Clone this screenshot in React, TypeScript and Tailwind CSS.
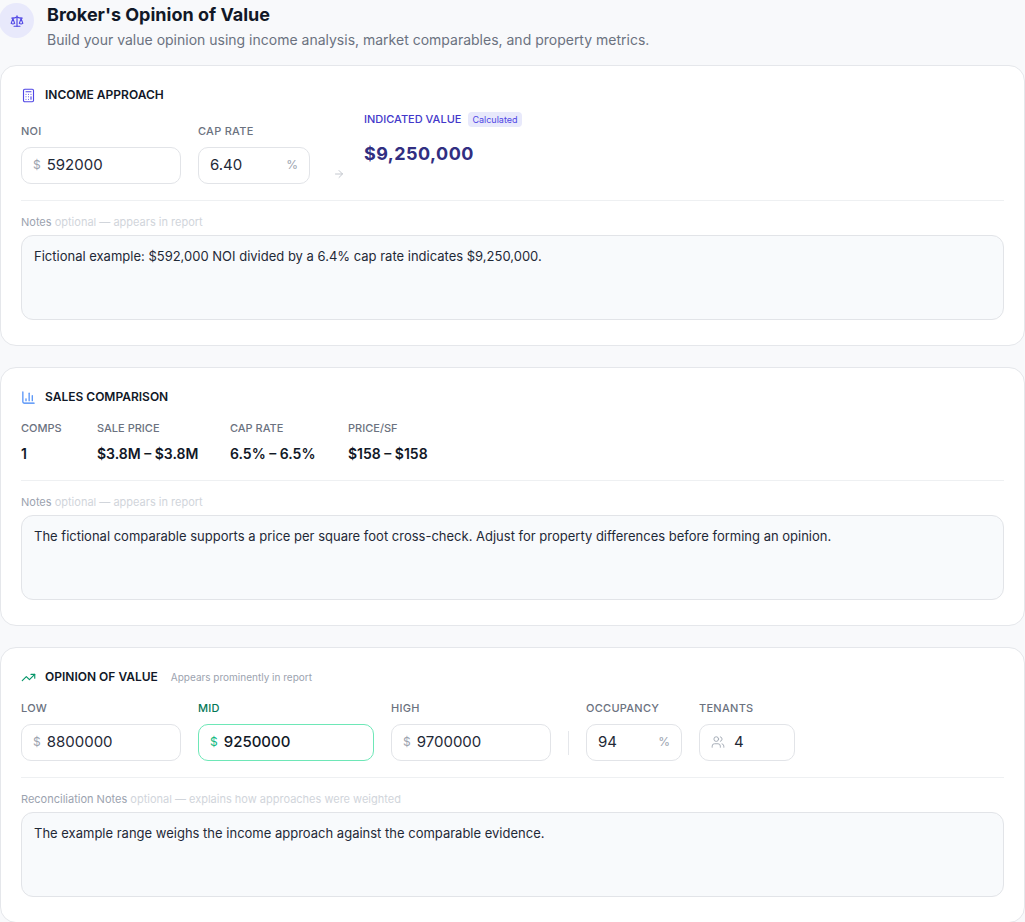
import { Scale, Calculator, BarChart3, TrendingUp, ArrowRight, Users } from "lucide-react";

function Field({ label, prefix, suffix, value, width, active, icon }: { label: string; prefix?: string; suffix?: string; value: string; width: string; active?: boolean; icon?: boolean }) {
  return (
    <div className={`flex flex-col ${width}`}>
      <div className={`text-[11px] font-medium tracking-wide mb-[7px] ${active ? "text-[#047857]" : "text-[#6b7280]"}`}>{label}</div>
      <div className={`h-[37px] rounded-[10px] border bg-white flex items-center px-[11px] ${active ? "border-[#6ee7b7]" : "border-[#e2e4e8]"}`}>
        {prefix && <span className={`text-[12px] mr-[6px] ${active ? "text-[#10b981]" : "text-[#9ca3af]"}`}>{prefix}</span>}
        {icon && <Users className="w-[14px] h-[14px] text-[#9ca3af] mr-[9px]" strokeWidth={1.5} />}
        <span className={`text-[15px] flex-1 ${active ? "text-[#111827] font-medium" : "text-[#1f2937]"}`}>{value}</span>
        {suffix && <span className="text-[12px] text-[#9ca3af]">{suffix}</span>}
      </div>
    </div>
  );
}

function Notes({ label, hint, text }: { label: string; hint: string; text: string }) {
  return (
    <div className="border-t border-[#eef0f2] pt-[13px]">
      <div className="text-[11px] mb-[5px]"><span className="text-[#9ca3af]">{label}</span> <span className="text-[#d1d5db]">{hint}</span></div>
      <div className="h-[85px] rounded-[12px] border border-[#e2e4e8] bg-[#f8fafc] px-[12px] py-[11px] text-[13px] text-[#1f2937]">{text}</div>
    </div>
  );
}

function Card({ children }: { children: React.ReactNode }) {
  return <div className="bg-white border border-[#e5e7eb] rounded-[16px] px-[20px] pt-[20px] pb-[25px]">{children}</div>;
}

export default function App() {
  return (
    <div className="min-h-[922px] bg-[#f8f9fb] flex flex-col gap-[21px]" style={{ fontFamily: "Inter, 'Noto Sans', sans-serif" }}>
      <div className="flex items-start gap-[13px] pt-[3px] -ml-[1px] -mb-[6px]">
        <div className="w-[35px] h-[35px] rounded-full bg-[#e8e9fb] flex items-center justify-center">
          <Scale className="w-[14px] h-[14px] text-[#4f46e5]" />
        </div>
        <div>
          <div className="text-[18px] font-bold text-[#111827] leading-[22px] mt-[1px]">Broker's Opinion of Value</div>
          <div className="text-[14px] text-[#6b7280] mt-[3px]">Build your value opinion using income analysis, market comparables, and property metrics.</div>
        </div>
      </div>

      <Card>
        <div className="flex items-center gap-[9px] mb-[19px]">
          <Calculator className="w-[15px] h-[15px] text-[#4f46e5]" strokeWidth={1.8} />
          <span className="text-[12px] font-semibold text-[#111827]">INCOME APPROACH</span>
        </div>
        <div className="flex items-end gap-[17px] pb-[16px]">
          <Field label="NOI" prefix="$" value="592000" width="w-[160px]" />
          <Field label="CAP RATE" suffix="%" value="6.40" width="w-[112px]" />
          <ArrowRight className="w-[12px] h-[12px] text-[#c4c8cf] mb-[4px] ml-[6px]" />
          <div className="flex flex-col self-start -mt-[12px] ml-[2px]">
            <div className="flex items-center gap-[7px]">
              <span className="text-[11px] font-medium text-[#4338ca]">INDICATED VALUE</span>
              <span className="text-[9px] px-[4px] py-[1px] rounded bg-[#e8e9fb] text-[#4f46e5]">Calculated</span>
            </div>
            <div className="text-[18px] font-bold text-[#312e81] mt-[12px] tracking-wide">$9,250,000</div>
          </div>
        </div>
        <Notes label="Notes" hint="optional — appears in report" text="Fictional example: $592,000 NOI divided by a 6.4% cap rate indicates $9,250,000." />
      </Card>

      <Card>
        <div className="flex items-center gap-[9px] mb-[14px]">
          <BarChart3 className="w-[15px] h-[15px] text-[#3b82f6]" strokeWidth={1.8} />
          <span className="text-[12px] font-semibold text-[#111827]">SALES COMPARISON</span>
        </div>
        <div className="flex gap-[32px] pb-[16px]">
          {[["COMPS", "1", "w-[44px]"], ["SALE PRICE", "$3.8M – $3.8M", "w-[101px]"], ["CAP RATE", "6.5% – 6.5%", "w-[86px]"], ["PRICE/SF", "$158 – $158", ""]].map(([l, v, w]) => (
            <div key={l} className={`${w} whitespace-nowrap`}>
              <div className="text-[11px] text-[#6b7280] font-medium">{l}</div>
              <div className="text-[14px] font-semibold text-[#111827] mt-[6px]">{v}</div>
            </div>
          ))}
        </div>
        <Notes label="Notes" hint="optional — appears in report" text="The fictional comparable supports a price per square foot cross-check. Adjust for property differences before forming an opinion." />
      </Card>

      <Card>
        <div className="flex items-center gap-[9px] mb-[14px]">
          <TrendingUp className="w-[15px] h-[15px] text-[#059669]" strokeWidth={1.8} />
          <span className="text-[12px] font-semibold text-[#111827]">OPINION OF VALUE</span>
          <span className="text-[10px] text-[#9ca3af] ml-[4px]">Appears prominently in report</span>
        </div>
        <div className="flex items-end gap-[17px] pb-[16px]">
          <Field label="LOW" prefix="$" value="8800000" width="w-[160px]" />
          <Field label="MID" prefix="$" value="9250000" width="w-[176px]" active />
          <Field label="HIGH" prefix="$" value="9700000" width="w-[160px]" />
          <div className="w-px h-[24px] bg-[#e5e7eb] mb-[6px]" />
          <Field label="OCCUPANCY" suffix="%" value="94" width="w-[96px]" />
          <Field label="TENANTS" value="4" width="w-[96px]" icon />
        </div>
        <Notes label="Reconciliation Notes" hint="optional — explains how approaches were weighted" text="The example range weighs the income approach against the comparable evidence." />
      </Card>
    </div>
  );
}
